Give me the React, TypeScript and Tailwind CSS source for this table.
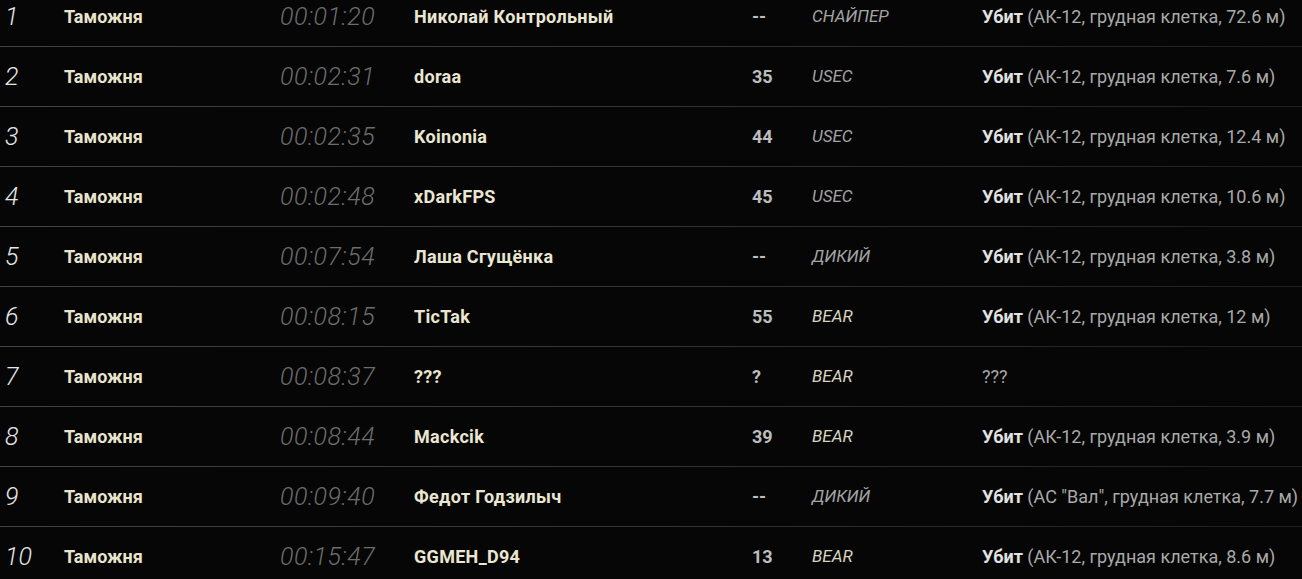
const rows = [
  { n: '1', time: '00:01:20', name: 'Николай Контрольный', lvl: '--', side: 'СНАЙПЕР', status: 'Убит', info: '(АК-12, грудная клетка, 72.6 м)' },
  { n: '2', time: '00:02:31', name: 'doraa', lvl: '35', side: 'USEC', status: 'Убит', info: '(АК-12, грудная клетка, 7.6 м)' },
  { n: '3', time: '00:02:35', name: 'Koinonia', lvl: '44', side: 'USEC', status: 'Убит', info: '(АК-12, грудная клетка, 12.4 м)' },
  { n: '4', time: '00:02:48', name: 'xDarkFPS', lvl: '45', side: 'USEC', status: 'Убит', info: '(АК-12, грудная клетка, 10.6 м)' },
  { n: '5', time: '00:07:54', name: 'Лаша Сгущёнка', lvl: '--', side: 'ДИКИЙ', status: 'Убит', info: '(АК-12, грудная клетка, 3.8 м)' },
  { n: '6', time: '00:08:15', name: 'TicTak', lvl: '55', side: 'BEAR', status: 'Убит', info: '(АК-12, грудная клетка, 12 м)' },
  { n: '7', time: '00:08:37', name: '???', lvl: '?', side: 'BEAR', status: '', info: '???' },
  { n: '8', time: '00:08:44', name: 'Mackcik', lvl: '39', side: 'BEAR', status: 'Убит', info: '(АК-12, грудная клетка, 3.9 м)' },
  { n: '9', time: '00:09:40', name: 'Федот Годзилыч', lvl: '--', side: 'ДИКИЙ', status: 'Убит', info: '(АС "Вал", грудная клетка, 7.7 м)' },
  { n: '10', time: '00:15:47', name: 'GGMEH_D94', lvl: '13', side: 'BEAR', status: 'Убит', info: '(АК-12, грудная клетка, 8.6 м)' },
];

export default function App() {
  return (
    <main className="h-[579px] overflow-hidden bg-[#060606] font-['Roboto',sans-serif]">
      <div className="-mt-[13px]">
        {rows.map((r, i) => (
          <div key={r.n}>
            <div className="grid h-[59px] grid-cols-[59px_216px_134px_338px_60px_170px_1fr] items-center pl-[5px]">
              <span className="text-[25px] font-light italic text-[#e6e6e6]">{r.n}</span>
              <span className="text-[18px] font-bold text-[#e9e4cc]">Таможня</span>
              <span className="text-[25px] font-light italic tracking-[0.5px] text-[#6d6d6d]">{r.time}</span>
              <span className="text-[18px] font-bold tracking-[0.3px] text-[#ebe6d2]">{r.name}</span>
              <span className="text-[18px] font-bold text-[#bdbdbd]">{r.lvl}</span>
              <span className={`text-[17px] italic ${r.side === 'BEAR' ? 'text-[#d8d4c0]' : 'text-[#a3a3a3]'}`}>{r.side}</span>
              <span className="whitespace-nowrap text-[18px] text-[#a9a9a9]">
                {r.status && <b className="font-bold text-[#e2e2e2]">{r.status} </b>}
                {r.info}
              </span>
            </div>
            {i < rows.length - 1 && (
              <div className="h-px bg-gradient-to-r from-[#434343] via-[#343434] to-[#1e1e1e]" />
            )}
          </div>
        ))}
      </div>
    </main>
  );
}
